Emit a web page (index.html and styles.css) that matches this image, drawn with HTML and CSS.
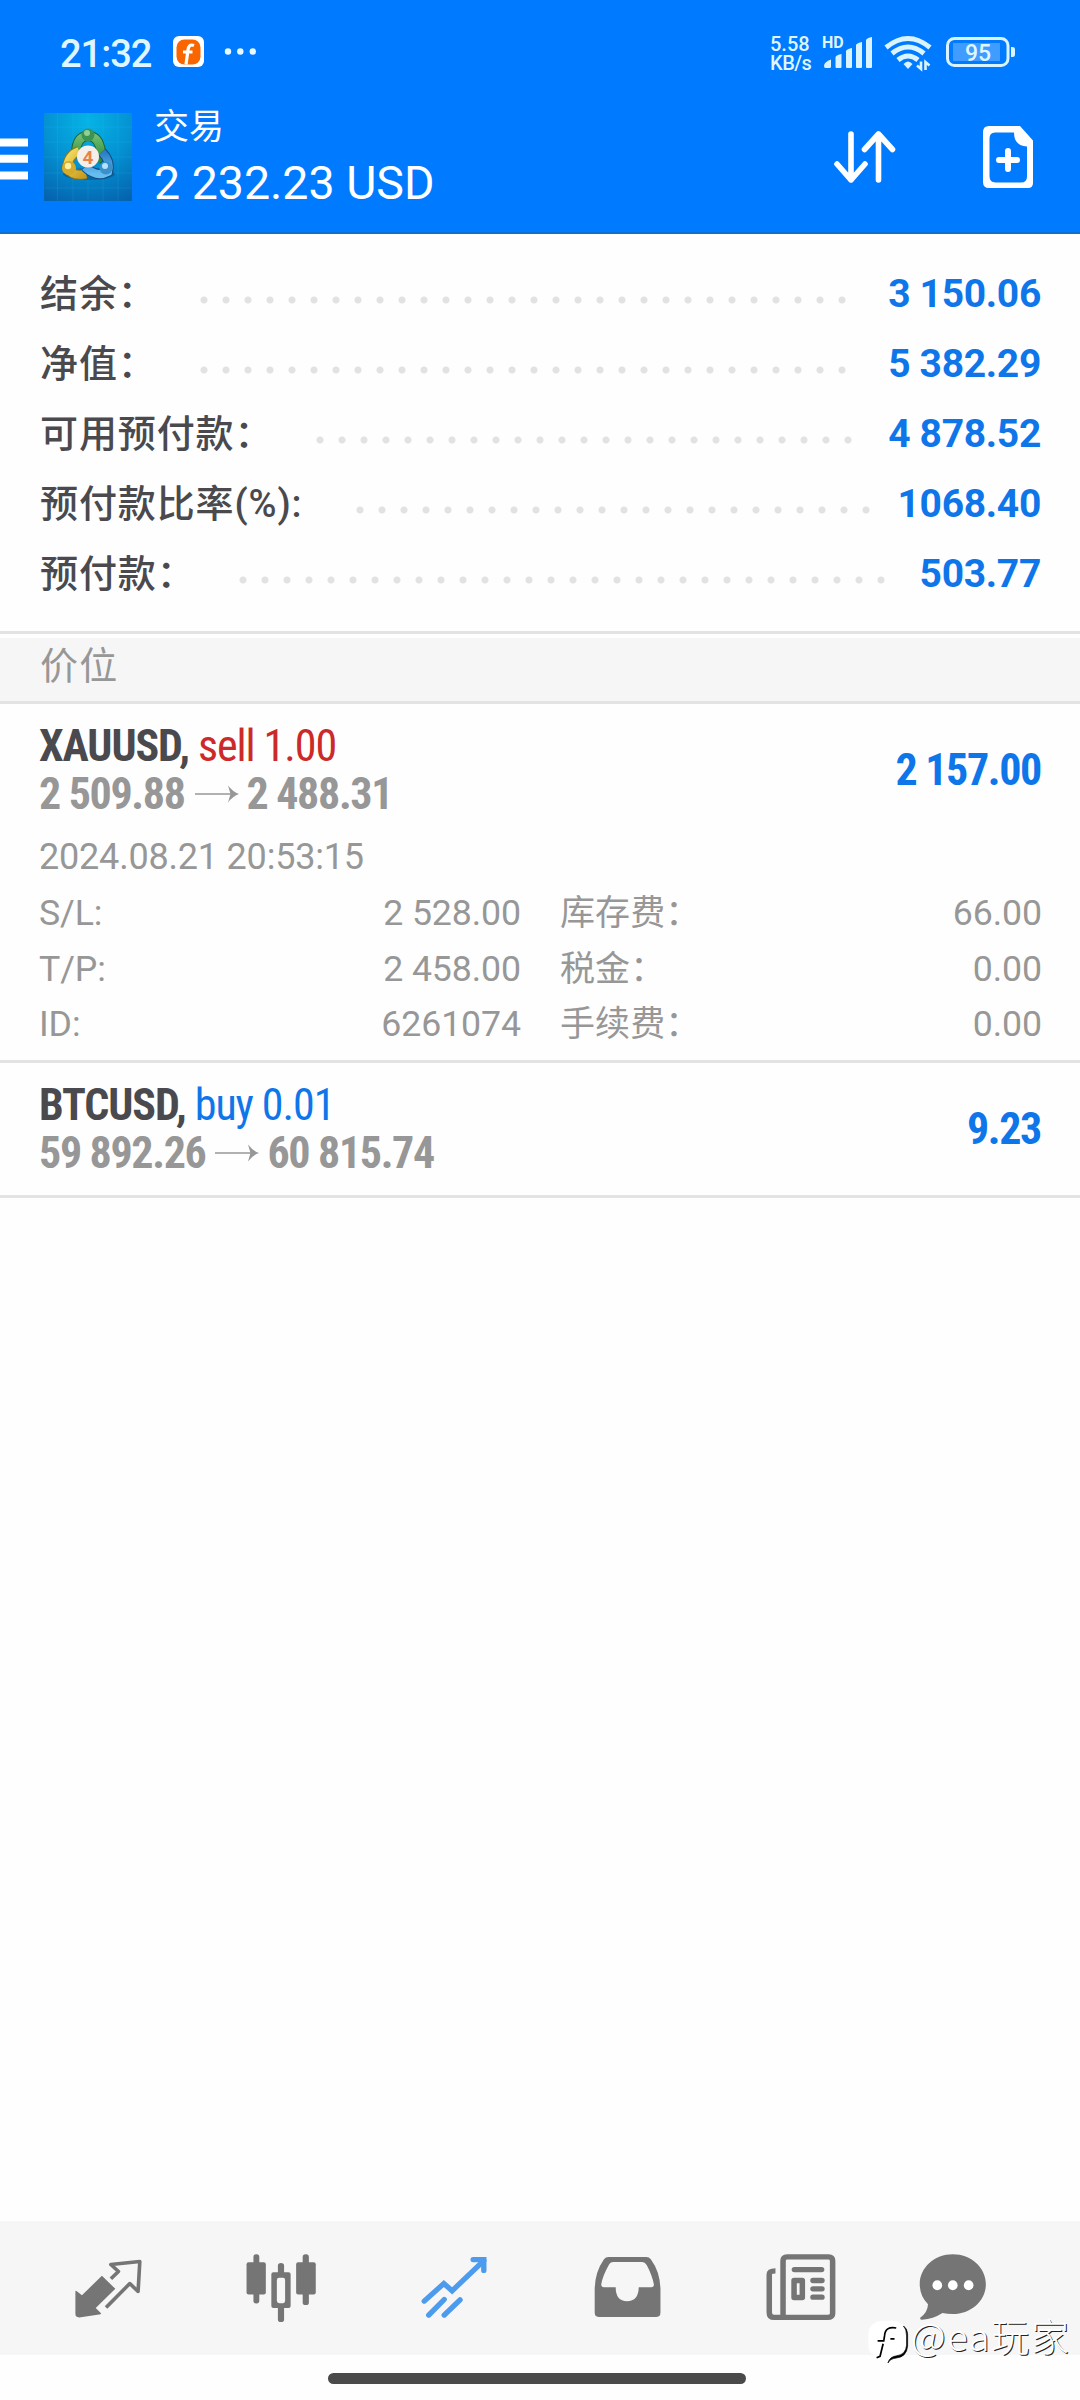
FILE: index.html
```html
<!DOCTYPE html>
<html lang="zh-CN">
<head>
<meta charset="utf-8">
<title>交易</title>
<link rel="stylesheet" href="styles.css">
</head>
<body>
<div class="app">
  <header class="top">
    <div class="status">
      <span class="clock">21:32</span>
      <svg class="notif" viewBox="0 0 84 32">
        <rect x="0" y="0" width="31" height="31" rx="6" fill="#fff"/>
        <rect x="3.5" y="3.5" width="24" height="25" rx="8" fill="#f96600"/>
        <path d="M21 9.500C17 8 15.500 10 15 14L13 28.500M10 16h9.500" fill="none" stroke="#fff" stroke-width="3.200"/>
        <g fill="#e8faff"><circle cx="55" cy="15.500" r="3.200"/><circle cx="67.300" cy="15.500" r="3.200"/><circle cx="79.800" cy="15.500" r="3.200"/></g>
      </svg>
      <span class="speed"><span>5.58</span><span>KB/s</span></span>
      <span class="hd">HD</span>
      <svg class="signals" viewBox="824 34 200 38" fill="#d9f3ff">
        <path d="M824 66q0-4 7-6.500v7q0 1.500-1.500 1.500h-4q-1.500 0-1.500-2zM835.500 57q1-2 6-3v13q0 1-1 1h-4q-1 0-1-1zM846 51q1-2 6-3v19q0 1-1 1h-4q-1 0-1-1zM856 45q1-2 6-3v25q0 1-1 1h-4q-1 0-1-1zM866 40q1-2 6-3v30q0 1-1 1h-4q-1 0-1-1z"/>
        <g fill="none" stroke="#d9f3ff" stroke-width="5"><path d="M886 47.500q22-18 44 0M892 53.500q16-13 32 0M898 60q10-8 20 0"/></g>
        <path d="M903.500 64q4.500-5 9 0l-4.500 5z"/>
        <path d="M917 65.500l4 3.500v-7.500M925.500 70v-8l4 3.500" fill="none" stroke="#d9f3ff" stroke-width="2.600"/>
        <rect x="947.500" y="38.500" width="60.500" height="27" rx="7" fill="none" stroke="#d9f3ff" stroke-width="3"/>
        <rect x="953" y="43" width="47" height="18" fill="#409cff"/>
        <path d="M1011 47h1.500q2.500 0 2.500 2v6q0 2-2.500 2h-1.500z"/>
        <text x="978" y="61" class="battery" text-anchor="middle">95</text>
      </svg>
    </div>
    <div class="bar">
      <svg class="menu" viewBox="0 0 28 42"><path d="M0 4.500h28M0 20.800h28M0 37.500h28" stroke="#fff" stroke-width="8"/></svg>
      <svg class="logo" viewBox="0 0 88 88">
        <defs>
          <radialGradient id="sky" cx=".5" cy=".1" r="1"><stop offset="0" stop-color="#05b3e6"/><stop offset=".5" stop-color="#0491d2"/><stop offset="1" stop-color="#0562ad"/></radialGradient>
          <linearGradient id="grn" x2="0" y2="1"><stop offset="0" stop-color="#6fbd72"/><stop offset="1" stop-color="#2d8a37"/></linearGradient>
          <linearGradient id="yel" x2="1" y2="1"><stop offset="0" stop-color="#f4df63"/><stop offset="1" stop-color="#c79a1d"/></linearGradient>
          <linearGradient id="blu" x2="0" y2="1"><stop offset="0" stop-color="#2a7cc4"/><stop offset="1" stop-color="#66bdf0"/></linearGradient>
        </defs>
        <rect width="88" height="88" fill="url(#sky)"/>
        <path d="M13.500 0v88M29 0v88M44 0v88M59 0v88M74 0v88M0 14h88M0 29h88M0 44h88M0 60h88M0 75h88" stroke="#3fc8ef" stroke-opacity=".15" stroke-width="1"/>
        <ellipse cx="45" cy="61" rx="26" ry="6" fill="#034b85" opacity=".5"/>
        <g fill="none">
          <path d="M32 39q1-16 12-16t13 16q0 5-4 8" stroke="#1c6338" stroke-width="10"/><path d="M32 39q1-16 12-16t13 16q0 5-4 8" stroke="url(#grn)" stroke-width="8"/>
          <path d="M35 38q-11 4-12 17q6 9 19 6" stroke="#8e751d" stroke-width="10"/><path d="M35 38q-11 4-12 17q6 9 19 6" stroke="url(#yel)" stroke-width="8"/>
          <path d="M58 39q9 9 6 20q-11 6-23-5" stroke="#124e83" stroke-width="10"/><path d="M58 39q9 9 6 20q-11 6-23-5" stroke="url(#blu)" stroke-width="8"/>
        </g>
        <circle cx="44" cy="22" r="6.500" fill="#3c9450"/><circle cx="43" cy="20" r="3" fill="#8fcf98"/>
        <circle cx="25" cy="55" r="7" fill="#d5ab2b"/><circle cx="24" cy="53" r="3.200" fill="#fbf0a2"/>
        <circle cx="62" cy="55" r="6.500" fill="#3b8fcb"/><circle cx="61" cy="53" r="3" fill="#b5e4fa"/>
        <circle cx="44" cy="43.500" r="11" fill="#f5eeea"/>
        <text class="four" x="44" y="50.500" text-anchor="middle">4</text>
      </svg>
      <div class="heading"><span class="title">交易</span><span class="total">2 232.23 USD</span></div>
      <svg class="sort" viewBox="0 0 62 52" fill="none" stroke="#fff" stroke-width="5.600" stroke-linecap="round" stroke-linejoin="round"><path d="M17 3v46M3 33l14 16 14-16M44.500 49V3M30.500 18.500L44.500 3l14 15.500"/></svg>
      <svg class="new" viewBox="0 0 50 62"><path fill="#fff" fill-rule="evenodd" d="M6 0H37L50 14.500V57q0 5-5 5H6q-6 0-6-6V6q0-6 6-6zM12 6.500q-5.500 0-5.500 6V50q0 6.500 6 6.500H38q6 0 6-6V20.500Q31 20 31 6.500z"/><path d="M16 34h18M25 25v18" stroke="#fff" stroke-width="6" stroke-linecap="round"/></svg>
    </div>
  </header>

  <main class="content">
    <section class="summary">
      <div class="line"><span class="label">结余：</span><i class="dots"></i><b class="value">3 150.06</b></div>
      <div class="line"><span class="label">净值：</span><i class="dots"></i><b class="value">5 382.29</b></div>
      <div class="line line-free"><span class="label">可用预付款：</span><i class="dots"></i><b class="value">4 878.52</b></div>
      <div class="line line-level"><span class="label">预付款比率(%):</span><i class="dots"></i><b class="value">1068.40</b></div>
      <div class="line line-margin"><span class="label">预付款：</span><i class="dots"></i><b class="value">503.77</b></div>
    </section>
    <h2 class="section">价位</h2>
    <article class="deal">
      <div class="deal-head">
        <div class="deal-main">
          <div class="symbol"><b>XAUUSD,</b> <span class="sell">sell 1.00</span></div>
          <div class="prices"><b>2 509.88</b><svg class="arrow" viewBox="0 0 44 18"><path d="M0 9h40" stroke="#979797" stroke-width="1.500"/><path d="M44 9q-6 2-11 8.500L35.500 9 33 .500Q38 7 44 9z" fill="#979797"/></svg><b>2 488.31</b></div>
        </div>
        <b class="profit">2 157.00</b>
      </div>
      <div class="time">2024.08.21 20:53:15</div>
      <div class="details">
        <span>S/L:</span><span class="num">2 528.00</span><span>库存费：</span><span class="num">66.00</span>
        <span>T/P:</span><span class="num">2 458.00</span><span>税金：</span><span class="num">0.00</span>
        <span>ID:</span><span class="num">6261074</span><span>手续费：</span><span class="num">0.00</span>
      </div>
    </article>
    <article class="deal">
      <div class="deal-head">
        <div class="deal-main">
          <div class="symbol"><b>BTCUSD,</b> <span class="buy">buy 0.01</span></div>
          <div class="prices"><b>59 892.26</b><svg class="arrow" viewBox="0 0 44 18"><path d="M0 9h40" stroke="#979797" stroke-width="1.500"/><path d="M44 9q-6 2-11 8.500L35.500 9 33 .500Q38 7 44 9z" fill="#979797"/></svg><b>60 815.74</b></div>
        </div>
        <b class="profit">9.23</b>
      </div>
    </article>
  </main>

  <nav class="tabs">
    <svg viewBox="63.9 62 502.4 403" preserveAspectRatio="none">
      <path d="M296 227l39 39-57 58 16 16q-2 3-6 3l-58 9q-11 0-11-10v-68q0-4 4-1l15 12z" fill="#757575"/>
      <path d="M322 236l22-22-22-21 84-9-5 90-24-24-69 72" fill="none" stroke="#757575" stroke-width="10.500" stroke-linejoin="round"/>
    </svg>
    <svg viewBox="566.300 62 502.400 403" preserveAspectRatio="none" fill="#757575">
      <rect x="716" y="186" width="56" height="97" rx="6"/><rect x="736" y="162" width="17" height="148" rx="8"/>
      <rect x="860" y="186" width="57" height="97" rx="6"/><rect x="879" y="162" width="18" height="153" rx="8"/>
      <path d="M807 216v-20q0-8 9-8t9 8v20h13q6 0 6 6v96q0 6-6 6h-13v34q0 8-9 8t-9-8v-34h-13q-6 0-6-6v-96q0-6 6-6zM811 233q-7 0-7 7v62q0 7 7 7h11q6 0 6-7v-62q0-7-6-7z" fill-rule="evenodd"/>
    </svg>
    <svg viewBox="1068.700 62 502.400 403" preserveAspectRatio="none" fill="none" stroke="#4c9bec" stroke-width="15.500">
      <path d="M1232 303l57-53 24 22 92-91" stroke-linejoin="miter" stroke-linecap="round"/><path d="M1374 178h31v33" stroke-linecap="round"/><path d="M1245 345l45-47M1290 345l46-46" stroke-linecap="round"/>
    </svg>
    <svg viewBox="3.100 62 502.400 403" preserveAspectRatio="none" fill="#757575">
      <path fill-rule="evenodd" d="M199 170h110q8 0 13 7 27 38 28 90v70q0 14-14 14H173q-14 0-14-14v-70q1-52 27-90 5-7 13-7zM213 185q-9 0-13 9-18 33-22 58 0 9 8 9h34q0 42 33 42t34-42h36q8 0 8-8-5-28-21-59-5-9-13-9z"/>
    </svg>
    <svg viewBox="505.500 62 502.400 403" preserveAspectRatio="none" fill="none" stroke="#757575" stroke-width="16">
      <path d="M705 352h130q15 0 15-12V182q0-12-12-12H718q-12 0-12 12v170h-26q-14 0-14-15V223q0-11 18-11"/>
      <path d="M739 208h79M793 241h26M793 266h26M793 291h26" stroke-linecap="round"/>
      <rect x="738" y="241" width="24" height="51" stroke-linejoin="round"/>
    </svg>
    <svg viewBox="1007.900 62 502.400 403" preserveAspectRatio="none">
      <path d="M1199 162c53 0 96 40 96 90s-43 90-96 90q-16 0-30-3-27 18-59 20-8 0-5-7 21-16 22-40-24-24-24-60c0-50 43-90 96-90z" fill="#757575"/>
      <g fill="#fff"><ellipse cx="1154" cy="255" rx="14" ry="15"/><ellipse cx="1199" cy="255" rx="14" ry="15"/><ellipse cx="1245" cy="255" rx="14" ry="15"/></g>
    </svg>
  </nav>
  <div class="gesture"><i class="pill"></i></div>
  <div class="stamp">
    <svg class="stamp-logo" viewBox="955 360 116 130" preserveAspectRatio="none">
      <rect x="953" y="362" width="112" height="114" rx="40" fill="#fff"/>
      <path d="M1055 378q9 10 9 30v28q-2 28-28 32-22 3-26 22 6-13 24-15 30-3 33-36v-36q-1-18-12-25z" stroke="#000" stroke-width="2"/>
      <path d="M1034 384q-32-6-34 24l-2 14M980 423h20M996 432l-9 38-10 4M1017 417h12" fill="none" stroke="#000" stroke-width="5"/>
    </svg>
    <span class="stamp-name">@ea玩家</span>
  </div>
</div>
</body>
</html>
```
FILE: styles.css
```css
* { box-sizing: border-box; }
body { margin: 0; background: #fff; font-family: Roboto, "Noto Sans CJK SC", sans-serif; }
.app { position: relative; width: 1080px; height: 2400px; display: flex; flex-direction: column; overflow: hidden; background: #fefefe; }
svg { display: block; flex: none; overflow: visible; }

.top { height: 234px; background: #007aff; border-bottom: 2px solid #126fd0; color: #fff; }
.status { display: flex; align-items: flex-start; height: 104px; padding: 34px 56px 0 60px; color: #dff6ff; }
.clock { width: 113px; padding-top: 1px; font-size: 38px; line-height: 38px; font-weight: 500; letter-spacing: -1px; }
.notif { width: 84px; height: 32px; margin-top: 2px; }
.speed { display: flex; flex-direction: column; width: 52px; margin: 1px 0 0 513px; font-size: 20px; line-height: 19px; font-weight: 500; }
.speed span + span { letter-spacing: -.5px; }
.hd { width: 2px; font-size: 16px; line-height: 18px; font-weight: 700; }
.signals { width: 200px; height: 38px; }
.battery { font: 500 23px Roboto, sans-serif; fill: #dff6ff; }

.bar { display: flex; align-items: flex-start; padding-top: 1px; }
.menu { width: 28px; height: 42px; margin-top: 33px; }
.logo { width: 88px; height: 88px; margin: 8px 0 0 16px; }
.four { font: 700 19px Roboto, sans-serif; fill: #e8824a; }
.heading { display: flex; flex-direction: column; width: 679px; padding: 1px 0 0 22px; }
.title { font-size: 35px; line-height: 44px; font-weight: 400; }
.total { font-size: 46.500px; line-height: 56px; margin-top: 5px; letter-spacing: 0; }
.sort { width: 62px; height: 52px; margin: 26px 0 0 23px; }
.new { width: 50px; height: 62px; margin: 21px 0 0 87px; }

.summary { height: 397px; padding: 24px 40px 0; }
.line { --label: 152.500px; --leader: 660px; display: flex; align-items: center; height: 70px; }
.line-free { --label: 269.300px; --leader: 550px; }
.line-level { --label: 308.500px; --leader: 528px; }
.line-margin { --label: 191.500px; --leader: 660px; }
.label { flex: none; width: var(--label); padding-bottom: 5px; font-size: 38px; letter-spacing: .9px; font-weight: 500; color: #4a4a4e; white-space: nowrap; }
.dots { flex: none; width: var(--leader); height: 8px; margin-top: 13px; background: radial-gradient(circle at 11px 4px, #e2e2e2 3px, transparent 4px) 0 0 / 22px 8px repeat-x; }
.value { margin: 1px -1px 0 auto; font-size: 39px; letter-spacing: -.3px; color: #0f76ea; white-space: nowrap; }

.section { margin: 0; height: 73px; padding: 6px 40px 0; border-top: 3px solid #e3e3e3; border-bottom: 3px solid #e3e3e3; background: linear-gradient(#fefefe 4px, #f6f6f6 4px); color: #979797; font-size: 38px; letter-spacing: 1.200px; line-height: 52px; font-weight: 400; }

.deal { padding: 18px 39px 0; border-bottom: 3px solid #e3e3e3; height: 359px; }
.deal + .deal { height: 135px; }
.deal-head { display: flex; align-items: flex-start; justify-content: space-between; height: 110px; font-size: 44px; font-stretch: 75%; letter-spacing: -1.350px; }
.symbol { line-height: 48px; color: #4a4a4e; letter-spacing: -1.080px; }
.sell { color: #cc2929; }
.buy { color: #0f76ea; }
.prices { display: flex; align-items: center; line-height: 48px; color: #979797; }
.arrow { width: 44px; height: 18px; margin: 0 8px 0 10px; }
.profit { color: #0f76ea; line-height: 96px; }
.time { font-size: 36px; line-height: 50px; letter-spacing: -.2px; color: #979797; font-weight: 400; }
.details { display: grid; grid-template-columns: 80px 402px 140px 1fr; grid-auto-rows: 55.500px; margin: 4px -1px 0 0; line-height: 55.500px; font-size: 35.700px; letter-spacing: -.1px; color: #979797; white-space: nowrap; }
.details span:nth-child(4n+3) { padding-left: 39px; font-size: 35px; letter-spacing: .1px; }
.num { text-align: right; }

.content { flex: 1; }
.tabs { display: flex; height: 134px; padding-left: 22px; background: #f6f6f6; }
.tabs svg { width: 173px; height: 134px; }
.gesture { display: flex; justify-content: center; height: 45px; padding: 18px 6px 0 0; }
.pill { width: 418px; height: 11px; border-radius: 6px; background: #4a4a4a; }
.stamp { position: absolute; left: 869px; top: 2320px; display: flex; align-items: flex-start; color: #fff; font-family: "Noto Sans CJK SC", sans-serif; font-weight: 300; font-size: 38px; line-height: 40px; letter-spacing: 1.700px; text-shadow: 1px 1px 0 #222; }
.stamp-logo { width: 40px; height: 43px; margin-right: 2px; }
.stamp-name { margin-top: -5px; }
```
